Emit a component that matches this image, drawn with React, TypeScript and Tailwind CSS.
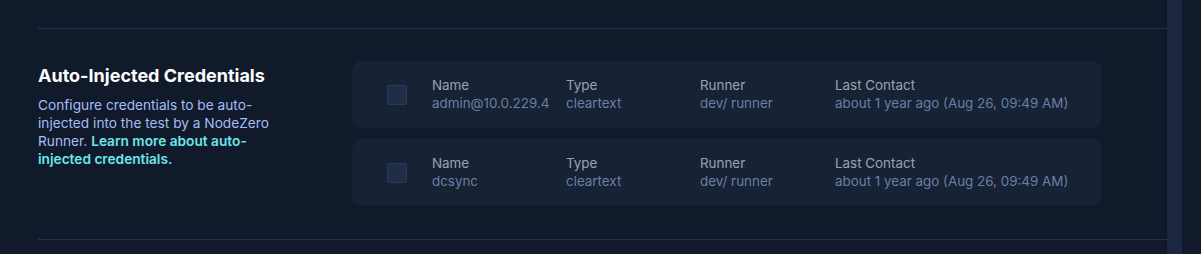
import React from "react";

const rows = [
  { name: "admin@10.0.229.4", type: "cleartext", runner: "dev/ runner", last: "about 1 year ago (Aug 26, 09:49 AM)" },
  { name: "dcsync", type: "cleartext", runner: "dev/ runner", last: "about 1 year ago (Aug 26, 09:49 AM)" },
];

function Field({ label, value, w }: { label: string; value: string; w: string }) {
  return (
    <div className={`${w} flex flex-col text-[13.4px] leading-[18px]`}>
      <span className="text-[#9aa3b2]">{label}</span>
      <span className="text-[#6a7fa3]">{value}</span>
    </div>
  );
}

export default function App() {
  return (
    <div
      className="w-[1201px] h-[254px] bg-[#111a2b] flex overflow-hidden"
      style={{ fontFamily: "Inter, 'Noto Sans', sans-serif" }}
    >
      <div className="w-[1167px] pl-[38px] pt-[28px]">
        <div className="border-t border-b border-[#22334f] h-[212px] flex pt-[32px]">
          <div className="w-[314px] shrink-0 pt-[4px]">
            <h2 className="text-white text-[18px] font-bold leading-[22px]">Auto-Injected Credentials</h2>
            <p className="mt-[9px] w-[242px] text-[13.7px] leading-[18px] text-[#a5bdf5]">
              Configure credentials to be auto-injected into the test by a NodeZero Runner.{" "}
              <span className="text-[#6be6ea] font-semibold">Learn more about auto-injected credentials.</span>
            </p>
          </div>
          <div className="flex flex-col gap-[11px]">
            {rows.map((r, i) => (
              <div key={i} className="w-[750px] h-[67px] rounded-[10px] bg-[#172235] flex items-center pl-[35px]">
                <div className="w-[20px] h-[20px] rounded-[2px] bg-[#1f2d47] border border-[#2b3b57] mr-[25px]" />
                <div className="flex -mt-[1px]">
                  <Field label="Name" value={r.name} w="w-[134px]" />
                  <Field label="Type" value={r.type} w="w-[134px]" />
                  <Field label="Runner" value={r.runner} w="w-[135px]" />
                  <Field label="Last Contact" value={r.last} w="w-[260px]" />
                </div>
              </div>
            ))}
          </div>
        </div>
      </div>
      <div className="w-[15px] h-full bg-[#1b2740]" />
      <div className="flex-1 h-full bg-[#111a2b]" />
    </div>
  );
}
